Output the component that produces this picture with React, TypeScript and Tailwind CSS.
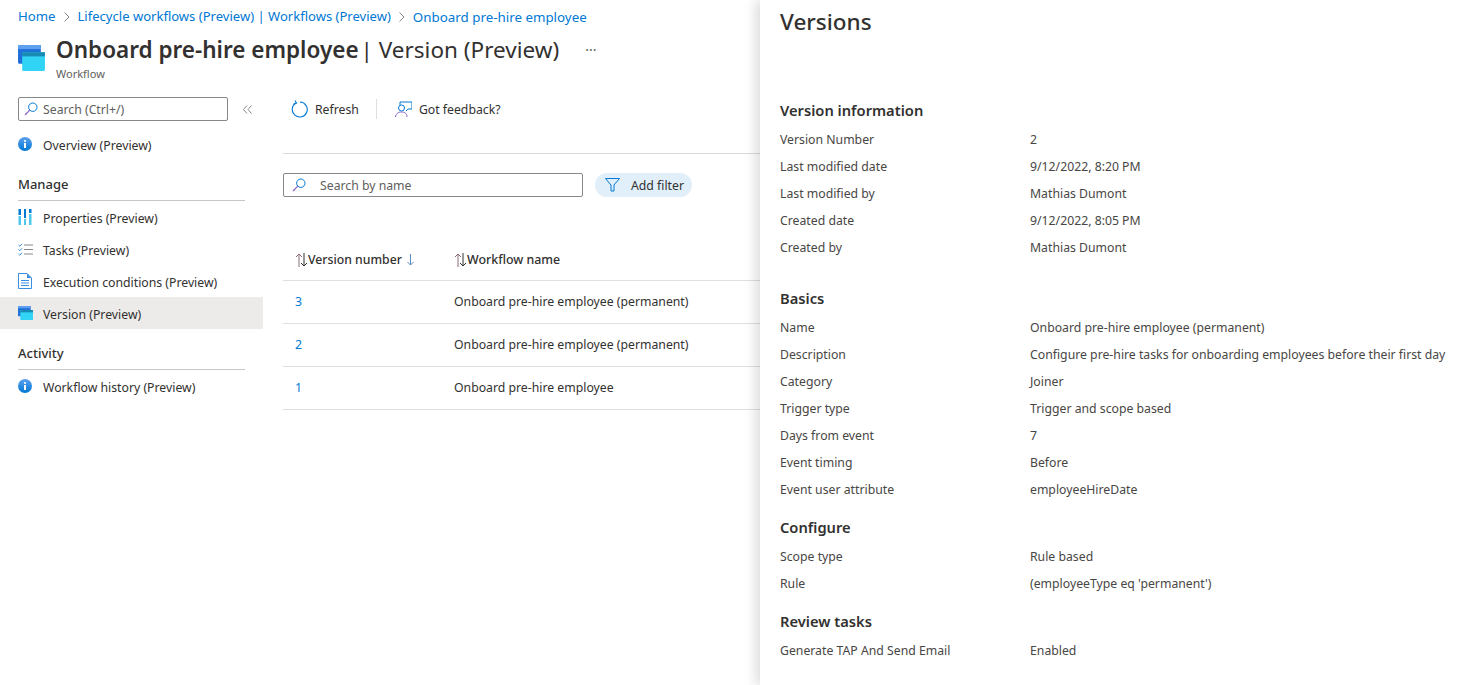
import React from 'react';

const FONT = "font-['Noto_Sans',sans-serif]";

function InfoIcon() {
  return (
    <svg width="14" height="14" viewBox="0 0 14 14" className="shrink-0">
      <defs>
        <linearGradient id="info" x1="0" y1="0" x2="0" y2="1">
          <stop offset="0" stopColor="#5ea0ef" />
          <stop offset="1" stopColor="#0078d4" />
        </linearGradient>
      </defs>
      <circle cx="7" cy="7" r="7" fill="url(#info)" />
      <rect x="6" y="6" width="2" height="5" fill="#fff" />
      <circle cx="7" cy="4" r="1.1" fill="#fff" />
    </svg>
  );
}

function WorkflowIcon({ size }: { size: number }) {
  return (
    <svg width={size} height={size * 0.96} viewBox="0 0 26 25" className="shrink-0">
      <rect x="0" y="0" width="22" height="18" rx="1" fill="#1f6fd8" />
      <rect x="0" y="0" width="22" height="4" fill="#5ea0ef" />
      <rect x="4" y="7" width="22" height="18" rx="1" fill="#32d4f5" />
      <rect x="4" y="7" width="22" height="4" fill="#198ab3" />
    </svg>
  );
}

function PropertiesIcon() {
  return (
    <svg width="14" height="16" viewBox="0 0 14 16" className="shrink-0">
      <rect x="0.5" y="0" width="2.5" height="6" fill="#0078d4" />
      <rect x="0.5" y="7" width="2.5" height="9" fill="#50c7f0" />
      <rect x="6" y="0" width="2" height="9" fill="#0078d4" />
      <rect x="6" y="10" width="2" height="6" fill="#50c7f0" />
      <rect x="11" y="0" width="2.5" height="4" fill="#0078d4" />
      <rect x="11" y="5" width="2.5" height="11" fill="#50c7f0" />
    </svg>
  );
}

function TasksIcon() {
  return (
    <svg width="15" height="13" viewBox="0 0 15 13" fill="none" className="shrink-0">
      <path d="M0.5 2 L1.8 3.2 L4 0.8 M0.5 6.5 L1.8 7.7 L4 5.3 M0.5 11 L1.8 12.2 L4 9.8" stroke="#3a8fe0" strokeWidth="1" />
      <path d="M6 2 H15 M6 6.5 H15 M6 11 H15" stroke="#8a8886" strokeWidth="1.2" />
    </svg>
  );
}

function DocIcon() {
  return (
    <svg width="14" height="16" viewBox="0 0 14 16" fill="none" className="shrink-0">
      <path d="M0.5 0.5 H9 L13.5 5 V15.5 H0.5 Z" fill="#fff" stroke="#3a8fe0" />
      <path d="M9 0.5 V5 H13.5 Z" fill="#3a8fe0" />
      <path d="M3 7.5 H11 M3 10 H11 M3 12.5 H11" stroke="#3a8fe0" />
    </svg>
  );
}

function SearchIcon() {
  return (
    <svg width="14" height="14" viewBox="0 0 14 14" fill="none" className="shrink-0">
      <circle cx="8.8" cy="5.2" r="4.2" stroke="#0078d4" />
      <path d="M5.8 8.2 L1 13" stroke="#8661c5" strokeWidth="1.2" />
    </svg>
  );
}

function SortArrows() {
  return (
    <svg width="13" height="14" viewBox="0 0 13 14" fill="none" className="shrink-0">
      <path d="M4 14 V1 M1 4 L4 1 L7 4" stroke="#8a6a7a" />
      <path d="M9 0 V13 M6 10 L9 13 L12 10" stroke="#323130" />
    </svg>
  );
}

function Chevron() {
  return (
    <svg width="6" height="10" viewBox="0 0 6 10" fill="none" className="mx-2 shrink-0">
      <path d="M0.5 0.5 L5 5 L0.5 9.5" stroke="#8a8886" />
    </svg>
  );
}

function SideItem({ icon, label, active }: { icon: React.ReactNode; label: string; active?: boolean }) {
  return (
    <div className={`flex h-8 items-center pl-[18px] ${active ? 'bg-[#edebe9]' : ''}`}>
      <div className="flex w-[25px] items-center">{icon}</div>
      <span className="pt-[4px] text-[12.25px] text-[#323130]">{label}</span>
    </div>
  );
}

function SideHeading({ label }: { label: string }) {
  return (
    <div className="mx-[18px] flex h-[32px] items-center border-b border-[#c8c6c4] text-[13px] font-medium text-[#323130]">
      {label}
    </div>
  );
}

function VersionRow({ version, name }: { version: string; name: string }) {
  return (
    <div className="flex h-[43px] items-center border-b border-[#e1dfdd] text-[12.25px]">
      <span className="w-[171px] pl-3 text-[#0078d4]">{version}</span>
      <span className="text-[#323130]">{name}</span>
    </div>
  );
}

function InfoSection({ title, rows, className }: { title: string; rows: string[][]; className: string }) {
  return (
    <section className={className}>
      <h3 className="flex h-[22px] items-center text-[14.7px] font-semibold text-[#323130]">{title}</h3>
      <div className="mt-[4px]">
        {rows.map(([label, value]) => (
          <div key={label} className="flex h-[27px] items-center pt-[3px] text-[12.25px] text-[#484644]">
            <span className="w-[250px]">{label}</span>
            <span className="whitespace-nowrap">{value}</span>
          </div>
        ))}
      </div>
    </section>
  );
}

export default function App() {
  return (
    <div className={`${FONT} flex h-[685px] w-[1472px] overflow-hidden bg-white`}>
      {/* Blade behind the panel */}
      <div className="w-[760px] shrink-0">
        <nav className="flex h-[34px] items-center whitespace-nowrap pl-[18px] text-[13.2px] text-[#0078d4]">
          <span>Home</span>
          <Chevron />
          <span className="text-[13.05px]">Lifecycle workflows (Preview) | Workflows (Preview)</span>
          <Chevron />
          <span className="text-[13.35px]">Onboard pre-hire employee</span>
        </nav>
        <header className="flex h-[46px] items-start pl-[18px]">
          <div className="mt-[11px] w-[38px]">
            <WorkflowIcon size={27} />
          </div>
          <div>
            <div className="flex items-center text-[22.5px] leading-[32px] text-[#323130]">
              <span className="font-semibold">Onboard pre-hire employee</span>
              <span className="ml-[2px]">| Version (Preview)</span>
              <span className="ml-[26px] text-sm text-[#605e5c]">···</span>
            </div>
            <div className="text-[11px] leading-[15px] text-[#605e5c]">Workflow</div>
          </div>
        </header>
        <div className="flex">
          <aside className="w-[263px] shrink-0 pt-[17px]">
            <div className="flex items-center pl-[18px]">
              <div className="flex h-6 w-[210px] items-center gap-[5px] rounded-[2px] border border-[#8a8886] pl-[5px] text-[12.25px] text-[#605e5c]">
                <SearchIcon />
                <span className="pt-[2px]">Search (Ctrl+/)</span>
              </div>
              <svg width="9" height="9" viewBox="0 0 9 9" fill="none" className="ml-[15px]">
                <path d="M4 0.5 L0.5 4.5 L4 8.5 M8.5 0.5 L5 4.5 L8.5 8.5" stroke="#8a8886" />
              </svg>
            </div>
            <div className="mt-[7px]">
              <SideItem icon={<InfoIcon />} label="Overview (Preview)" />
            </div>
            <div className="mt-[9px]">
              <SideHeading label="Manage" />
            </div>
            <SideItem icon={<PropertiesIcon />} label="Properties (Preview)" />
            <SideItem icon={<TasksIcon />} label="Tasks (Preview)" />
            <SideItem icon={<DocIcon />} label="Execution conditions (Preview)" />
            <SideItem icon={<WorkflowIcon size={15} />} label="Version (Preview)" active />
            <div className="mt-[9px]">
              <SideHeading label="Activity" />
            </div>
            <SideItem icon={<InfoIcon />} label="Workflow history (Preview)" />
          </aside>
          <main className="min-w-0 flex-1 pl-5">
            <div className="flex h-[73px] items-start pt-[17px] text-[12.25px] text-[#323130]">
              <div className="flex h-6 items-center gap-[7px] pl-[8px]">
                <svg width="17" height="18" viewBox="0 0 17 18" fill="none">
                  <path d="M5 3 A7.5 7.5 0 1 0 9 2" stroke="#0078d4" strokeWidth="1.1" />
                  <path d="M4 0.5 L5.5 3.2 L2.5 4" stroke="#0078d4" strokeWidth="1.1" />
                </svg>
                <span className="pt-[2px]">Refresh</span>
              </div>
              <div className="ml-[17px] mr-[18px] mt-[2px] h-5 w-px bg-[#e1dfdd]" />
              <div className="flex h-6 items-center gap-[7px]">
                <svg width="17" height="17" viewBox="0 0 17 17" fill="none">
                  <path d="M5 4 V1 H17 V8 H13 L11 10" stroke="#0078d4" />
                  <circle cx="6.5" cy="7" r="3" stroke="#0078d4" />
                  <path d="M0.5 16 C1 12 4 11 6.5 11 C9 11 12 12 12 16" stroke="#8661c5" />
                </svg>
                <span className="pt-[2px]">Got feedback?</span>
              </div>
            </div>
            <div className="border-t border-[#d9d9d9]" />
            <div className="mt-[19px] flex items-center">
              <div className="flex h-6 w-[300px] items-center rounded-[2px] border border-[#8a8886] pl-2 text-[12.25px] text-[#605e5c]">
                <SearchIcon />
                <span className="ml-[14px] pt-[2px]">Search by name</span>
              </div>
              <div className="ml-3 flex h-6 items-center gap-[11px] rounded-full bg-[#e1effa] pl-[10px] pr-2 text-[12.25px] text-[#323130]">
                <svg width="15" height="14" viewBox="0 0 15 14" fill="none">
                  <path d="M0.5 0.5 H14.5 L9 7 V13 H6 V7 Z" stroke="#0078d4" />
                </svg>
                <span className="pt-[2px]">Add filter</span>
              </div>
            </div>
            <div className="mt-[39px] flex h-[45px] items-center border-b border-[#e1dfdd] pt-[4px] text-[12.25px] font-medium text-[#323130]">
              <div className="flex w-[171px] items-center pl-3">
                <SortArrows />
                <span>Version number</span>
                <svg width="7" height="12" viewBox="0 0 7 12" fill="none" className="ml-[5px]">
                  <path d="M3.5 0 V11 M0.5 8 L3.5 11 L6.5 8" stroke="#5b8fc4" />
                </svg>
              </div>
              <div className="flex items-center">
                <SortArrows />
                <span className="text-[12.4px]">Workflow name</span>
              </div>
            </div>
            <VersionRow version="3" name="Onboard pre-hire employee (permanent)" />
            <VersionRow version="2" name="Onboard pre-hire employee (permanent)" />
            <VersionRow version="1" name="Onboard pre-hire employee" />
          </main>
        </div>
      </div>

      {/* Versions panel */}
      <aside className="z-10 h-full w-[712px] shrink-0 bg-white pl-5 shadow-[-4px_0_12px_rgba(0,0,0,0.15)]">
        <h2 className="pt-[6px] text-[22.5px] font-medium leading-[32px] text-[#323130]">Versions</h2>
        <InfoSection
          className="mt-[61px]"
          title="Version information"
          rows={[
            ['Version Number', '2'],
            ['Last modified date', '9/12/2022, 8:20 PM'],
            ['Last modified by', 'Mathias Dumont'],
            ['Created date', '9/12/2022, 8:05 PM'],
            ['Created by', 'Mathias Dumont'],
          ]}
        />
        <InfoSection
          className="mt-[27px]"
          title="Basics"
          rows={[
            ['Name', 'Onboard pre-hire employee (permanent)'],
            ['Description', 'Configure pre-hire tasks for onboarding employees before their first day'],
            ['Category', 'Joiner'],
            ['Trigger type', 'Trigger and scope based'],
            ['Days from event', '7'],
            ['Event timing', 'Before'],
            ['Event user attribute', 'employeeHireDate'],
          ]}
        />
        <InfoSection
          className="mt-[14px]"
          title="Configure"
          rows={[
            ['Scope type', 'Rule based'],
            ['Rule', "(employeeType eq 'permanent')"],
          ]}
        />
        <InfoSection
          className="mt-[14px]"
          title="Review tasks"
          rows={[['Generate TAP And Send Email', 'Enabled']]}
        />
      </aside>
    </div>
  );
}
